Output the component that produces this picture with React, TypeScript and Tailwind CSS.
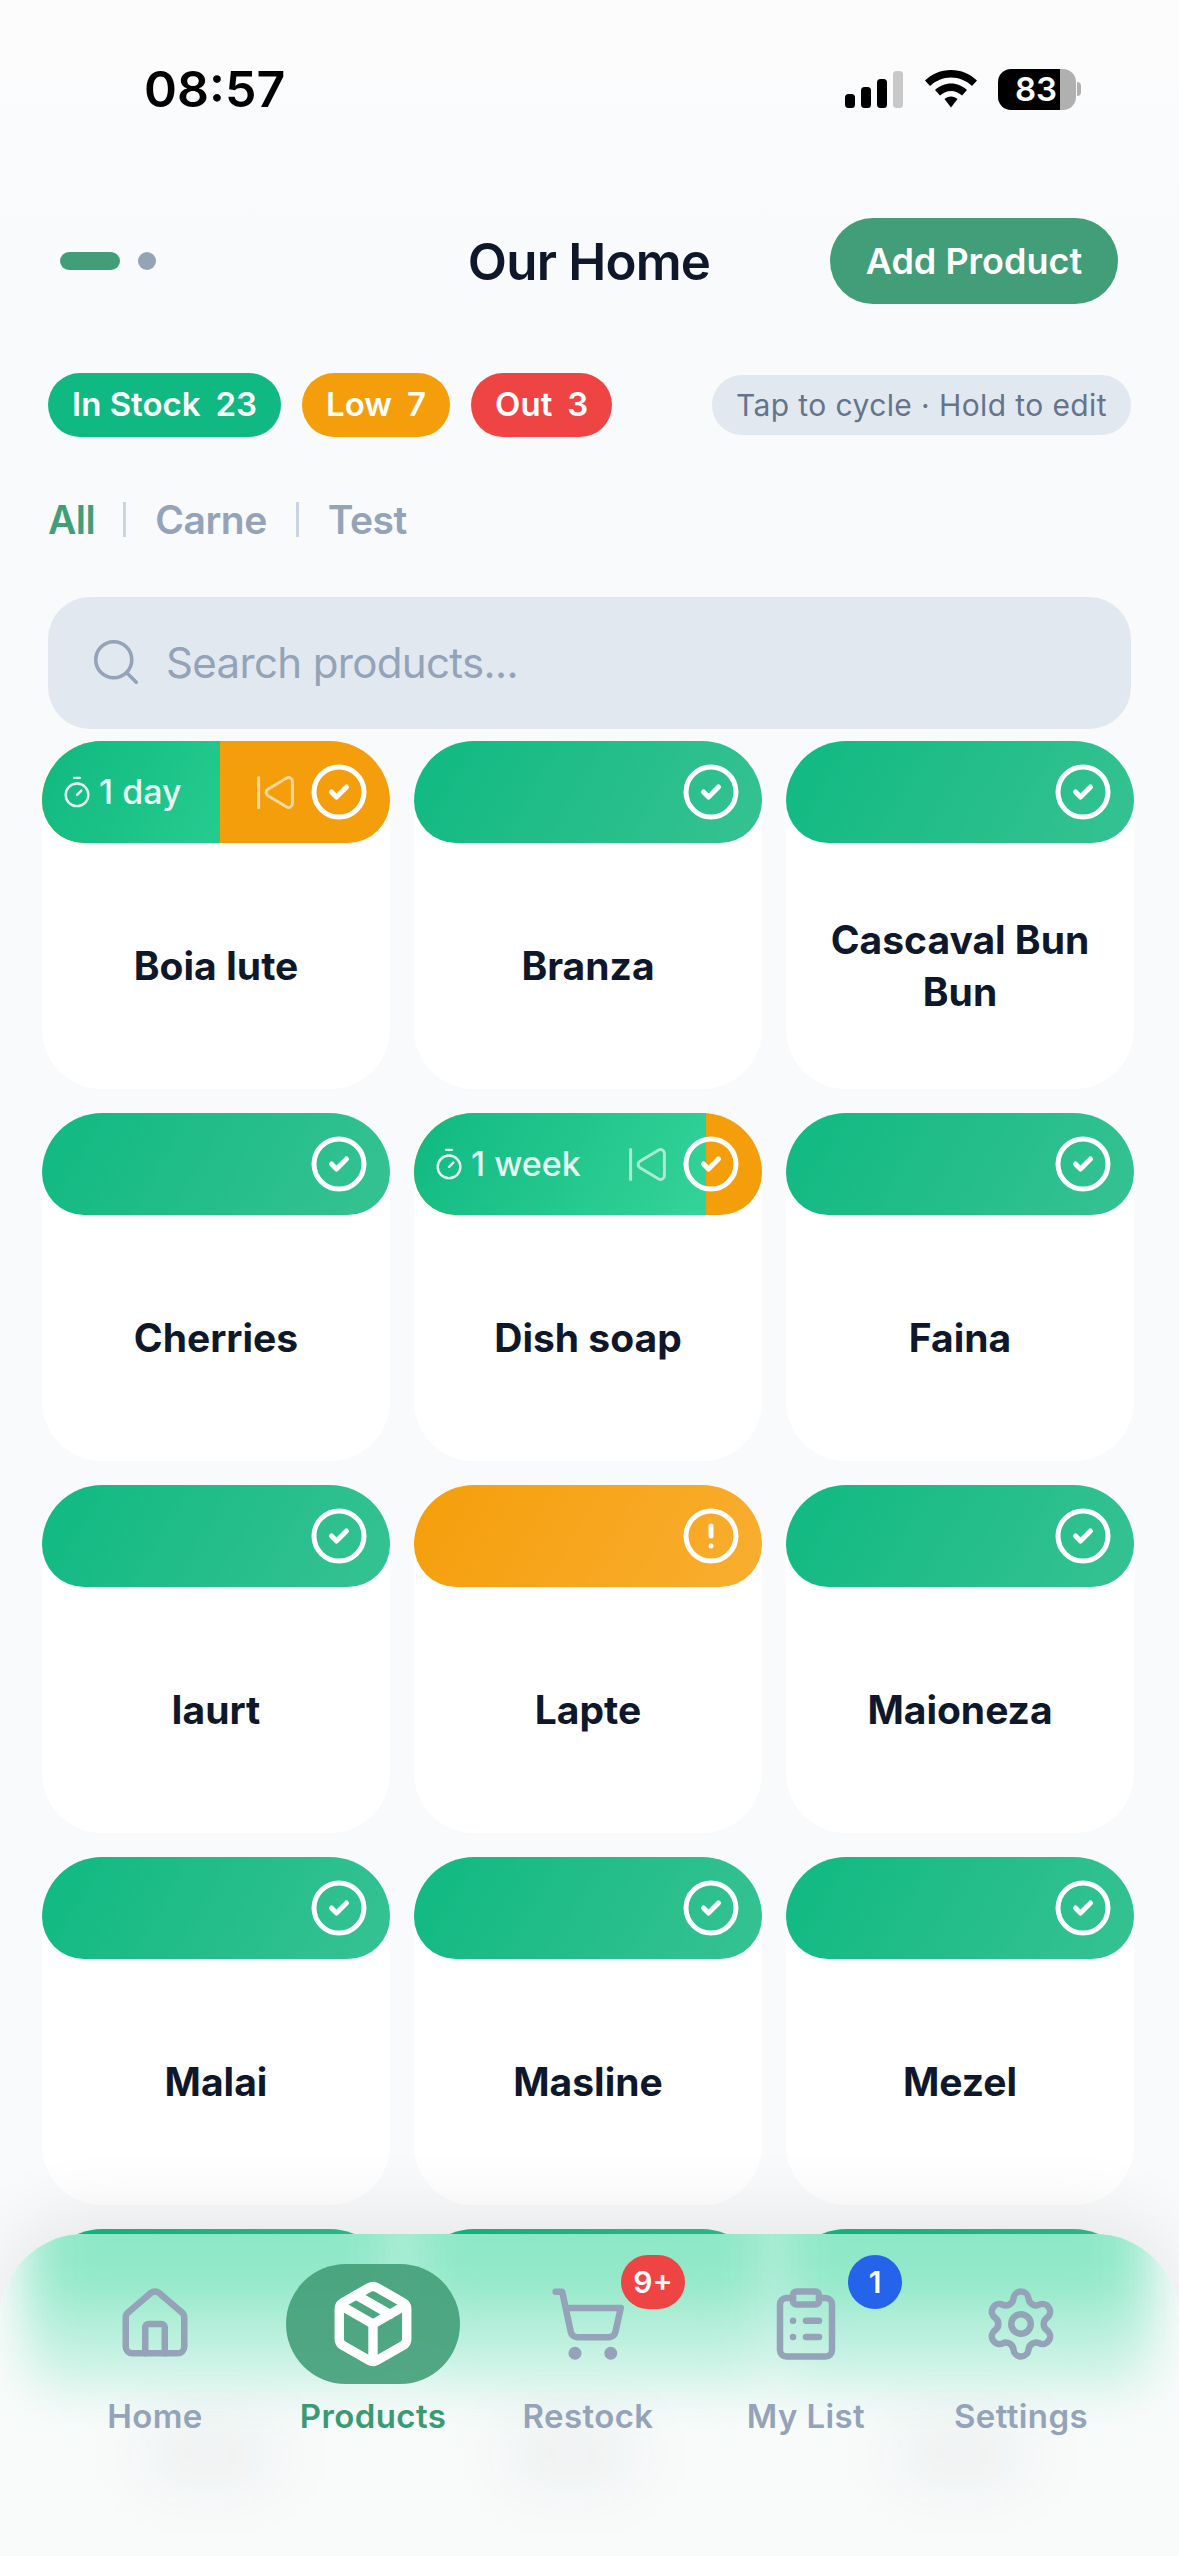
import { Search, Timer, SkipBack, CircleCheck, CircleAlert, House, Package, ShoppingCart, ClipboardList, Settings } from 'lucide-react';

type Product = {
  name: string;
  tone?: 'ok' | 'low';
  timer?: string;
  fill?: string;
};

const products: Product[] = [
  { name: 'Boia Iute', timer: '1 day', fill: 'w-[178px] bg-[linear-gradient(120deg,#10b981,#26cb8e)]' },
  { name: 'Branza' },
  { name: 'Cascaval Bun Bun' },
  { name: 'Cherries' },
  { name: 'Dish soap', timer: '1 week', fill: 'w-[292px] bg-[linear-gradient(120deg,#10b981,#34d399)]' },
  { name: 'Faina' },
  { name: 'Iaurt' },
  { name: 'Lapte', tone: 'low' },
  { name: 'Maioneza' },
  { name: 'Malai' },
  { name: 'Masline' },
  { name: 'Mezel' },
  // last row sits behind the nav, names can't be read
  { name: '' },
  { name: '' },
  { name: '' },
];

const StatusBar = () => (
  <div className="mt-[35px] flex h-[108px] items-center justify-between pl-[144px] pr-[98px]">
    <span className="text-[50px] font-semibold leading-none text-black">08:57</span>
    <div className="flex items-center">
      <svg width="58" height="37" viewBox="0 0 58 37" className="mr-[22px]">
        <rect x="0" y="23" width="10" height="14" rx="3.5" fill="#000" />
        <rect x="16" y="16" width="10" height="21" rx="3.5" fill="#000" />
        <rect x="32" y="8" width="10" height="29" rx="3.5" fill="#000" />
        <rect x="48" y="0" width="10" height="37" rx="3.5" fill="#c8c8c8" />
      </svg>
      <svg width="52" height="38" viewBox="0 0 52 38" className="mr-[21px]">
        <path d="M26 0C16 0 7 4 0 10.500L5 16C11 10.500 18 7.500 26 7.500C34 7.500 41 10.500 47 16L52 10.500C45 4 36 0 26 0Z" fill="#000" />
        <path d="M26 13.500C20 13.500 14.500 16 10 20L15 25.500C18 22.800 22 21 26 21C30 21 34 22.800 37 25.500L42 20C37.500 16 32 13.500 26 13.500Z" fill="#000" />
        <path d="M26 26.500C23.500 26.500 21.300 27.500 19.500 29L26 37.500L32.500 29C30.700 27.500 28.500 26.500 26 26.500Z" fill="#000" />
      </svg>
      <div className="flex h-[41px] items-center">
        <div className="flex h-full w-[62px] items-center justify-end rounded-l-[13px] bg-black pr-[3px] text-[33px] font-semibold leading-none text-white">83</div>
        <div className="h-full w-[16px] rounded-r-[13px] bg-[#b0b0b0]" />
        <div className="ml-[1px] h-[14px] w-[4px] rounded-r-full bg-[#b0b0b0]" />
      </div>
    </div>
  </div>
);

const Header = () => (
  <div className="mt-[75px] grid grid-cols-[1fr_auto_1fr] items-center pl-[60px] pr-[61px]">
    <div className="flex items-center gap-[18px]">
      <span className="h-[18px] w-[60px] rounded-full bg-[#429e78]" />
      <span className="h-[18px] w-[18px] rounded-full bg-[#94a3b8]" />
    </div>
    <h1 className="text-[51px] font-semibold leading-none tracking-[-0.8px] text-[#0f172a]">Our Home</h1>
    <button className="h-[86px] w-[288px] justify-self-end rounded-full bg-[#429e78] text-[36px] font-semibold text-white">Add Product</button>
  </div>
);

const Chip = ({ label, count, color }: { label: string; count: number; color: string }) => (
  <span className={`flex h-[64px] items-center gap-[15px] rounded-full px-[24px] text-[33px] font-semibold text-white ${color}`}>
    <span>{label}</span>
    <span>{count}</span>
  </span>
);

const Summary = () => (
  <div className="mt-[69px] flex items-center pl-[48px] pr-[48px]">
    <div className="flex gap-[21px]">
      <Chip label="In Stock" count={23} color="bg-[#10b981]" />
      <Chip label="Low" count={7} color="bg-[#f59e0b]" />
      <Chip label="Out" count={3} color="bg-[#ef4444]" />
    </div>
    <span className="ml-auto flex h-[60px] items-center rounded-full bg-[#e2e8f0] px-[24px] text-[30px] tracking-[0.4px] text-[#64748b]">
      Tap to cycle · Hold to edit
    </span>
  </div>
);

const Tabs = () => (
  <div className="mt-[58px] flex h-[48px] items-center pl-[48px] text-[39px] font-semibold leading-none tracking-[-0.5px] text-[#94a3b8]">
    <span className="text-[#429e78]">All</span>
    <span className="ml-[28px] mr-[29px] h-[35px] w-[3px] bg-[#cbd5e1]" />
    <span>Carne</span>
    <span className="mx-[29px] h-[35px] w-[3px] bg-[#cbd5e1]" />
    <span>Test</span>
  </div>
);

const SearchBar = () => (
  <div className="mx-[48px] mt-[54px] flex h-[132px] items-center rounded-[42px] bg-[#e2e8f0] pb-[2px] pl-[41px]">
    <Search size={54} strokeWidth={1.6} className="text-[#94a3b8]" />
    <span className="ml-[23px] text-[42px] tracking-[-0.65px] text-[#94a3b8]">Search products...</span>
  </div>
);

const Card = ({ product }: { product: Product }) => {
  const isLow = product.tone === 'low';
  let headerBg = 'bg-[linear-gradient(120deg,#10b981,#36c292)]';
  if (isLow) headerBg = 'bg-[linear-gradient(120deg,#f59e0b,#f9ae30)]';
  if (product.timer) headerBg = 'bg-[#f59e0b]';

  return (
    <div className="flex h-[348px] flex-col rounded-[60px] bg-white">
      <div className={`relative flex h-[102px] items-center overflow-hidden rounded-t-[60px] rounded-b-[42px] pl-[18px] pr-[21px] text-white ${headerBg}`}>
        {product.fill && <div className={`absolute inset-y-0 left-0 ${product.fill}`} />}
        {product.timer && (
          <div className="relative flex items-center gap-[5px] text-[34px] font-medium leading-none text-white/90">
            <Timer size={34} strokeWidth={1.7} />
            <span>{product.timer}</span>
          </div>
        )}
        <div className="relative ml-auto flex items-center gap-[11px]">
          {product.timer && <SkipBack size={45} strokeWidth={1.6} className="opacity-60" />}
          {isLow ? <CircleAlert size={60} strokeWidth={2} /> : <CircleCheck size={60} strokeWidth={2} />}
        </div>
      </div>
      <div className="flex flex-1 items-center justify-center px-[30px] text-center text-[39px] font-[650] leading-[52px] text-[#0f172a]">
        {product.name}
      </div>
    </div>
  );
};

const NavItem = ({ label, center, children, badge, badgeClass, active }: {
  label: string;
  center: string;
  children: React.ReactNode;
  badge?: string;
  badgeClass?: string;
  active?: boolean;
}) => (
  <div className={`absolute top-[30px] flex w-[200px] -translate-x-1/2 flex-col items-center ${center}`}>
    <div className={`relative flex h-[120px] w-[174px] items-center justify-center rounded-full ${active ? 'bg-[#429e78]/90 text-white' : 'text-[#94a3b8]'}`}>
      {children}
      {badge && (
        <span className={`absolute top-[-9px] flex h-[54px] items-center justify-center rounded-full text-[30px] font-semibold leading-none text-white ${badgeClass}`}>
          {badge}
        </span>
      )}
    </div>
    <span className={`mt-[12px] text-[33px] font-semibold leading-[40px] tracking-[0.4px] ${active ? 'text-[#3a9a73]' : 'text-[#94a3b8]'}`}>{label}</span>
  </div>
);

// frosted glass look: blurred copies of what lies behind the nav
const NavGlass = () => (
  <div className="absolute inset-0 overflow-hidden rounded-t-[84px] bg-[#f9fbfb]">
    <div className="absolute inset-x-[24px] top-[-100px] h-[265px] bg-[linear-gradient(#bdf0df_50%,#c8f2e4_72%,transparent)] blur-[24px]" />
    <div className="absolute left-[42px] top-[-100px] h-[270px] w-[348px] bg-[linear-gradient(#8ee8c7_54%,#c0f0e0_75%,transparent)] blur-[24px]" />
    <div className="absolute left-[414px] top-[-100px] h-[270px] w-[348px] bg-[linear-gradient(#8ee8c7_54%,#c0f0e0_75%,transparent)] blur-[24px]" />
    <div className="absolute left-[786px] top-[-100px] h-[270px] w-[348px] bg-[linear-gradient(#8ee8c7_54%,#c0f0e0_75%,transparent)] blur-[24px]" />
    <div className="absolute left-[150px] top-[206px] h-[28px] w-[120px] bg-[#0f172a]/12 blur-[34px]" />
    <div className="absolute left-[511px] top-[206px] h-[28px] w-[120px] bg-[#0f172a]/12 blur-[34px]" />
    <div className="absolute left-[902px] top-[206px] h-[28px] w-[120px] bg-[#0f172a]/12 blur-[34px]" />
  </div>
);

const BottomNav = () => (
  <div className="absolute inset-x-0 bottom-0 h-[322px] rounded-t-[84px] shadow-[0_-24px_70px_rgba(0,0,0,0.07)]">
    <NavGlass />
    <NavItem label="Home" center="left-[155px]"><House size={78} strokeWidth={2} /></NavItem>
    <NavItem label="Products" center="left-[373px]" active><Package size={90} strokeWidth={2.500} /></NavItem>
    <NavItem label="Restock" center="left-[588px]" badge="9+" badgeClass="left-[120px] w-[64px] bg-[#ef4444]"><ShoppingCart size={78} strokeWidth={2} /></NavItem>
    <NavItem label="My List" center="left-[806px]" badge="1" badgeClass="left-[129px] w-[54px] bg-[#2563eb]"><ClipboardList size={78} strokeWidth={2} /></NavItem>
    <NavItem label="Settings" center="left-[1021px]"><Settings size={78} strokeWidth={2} /></NavItem>
  </div>
);

export default function App() {
  return (
    <div className="relative h-[2556px] w-[1179px] overflow-hidden bg-[linear-gradient(#fcfcfc,#f8fafc_300px)] [font-family:Inter,sans-serif]">
      <StatusBar />
      <Header />
      <Summary />
      <Tabs />
      <SearchBar />
      <div className="mt-[12px] grid grid-cols-3 gap-[24px] pl-[42px] pr-[45px]">
        {products.map((p, i) => (
          <Card key={i} product={p} />
        ))}
      </div>
      <BottomNav />
    </div>
  );
}
